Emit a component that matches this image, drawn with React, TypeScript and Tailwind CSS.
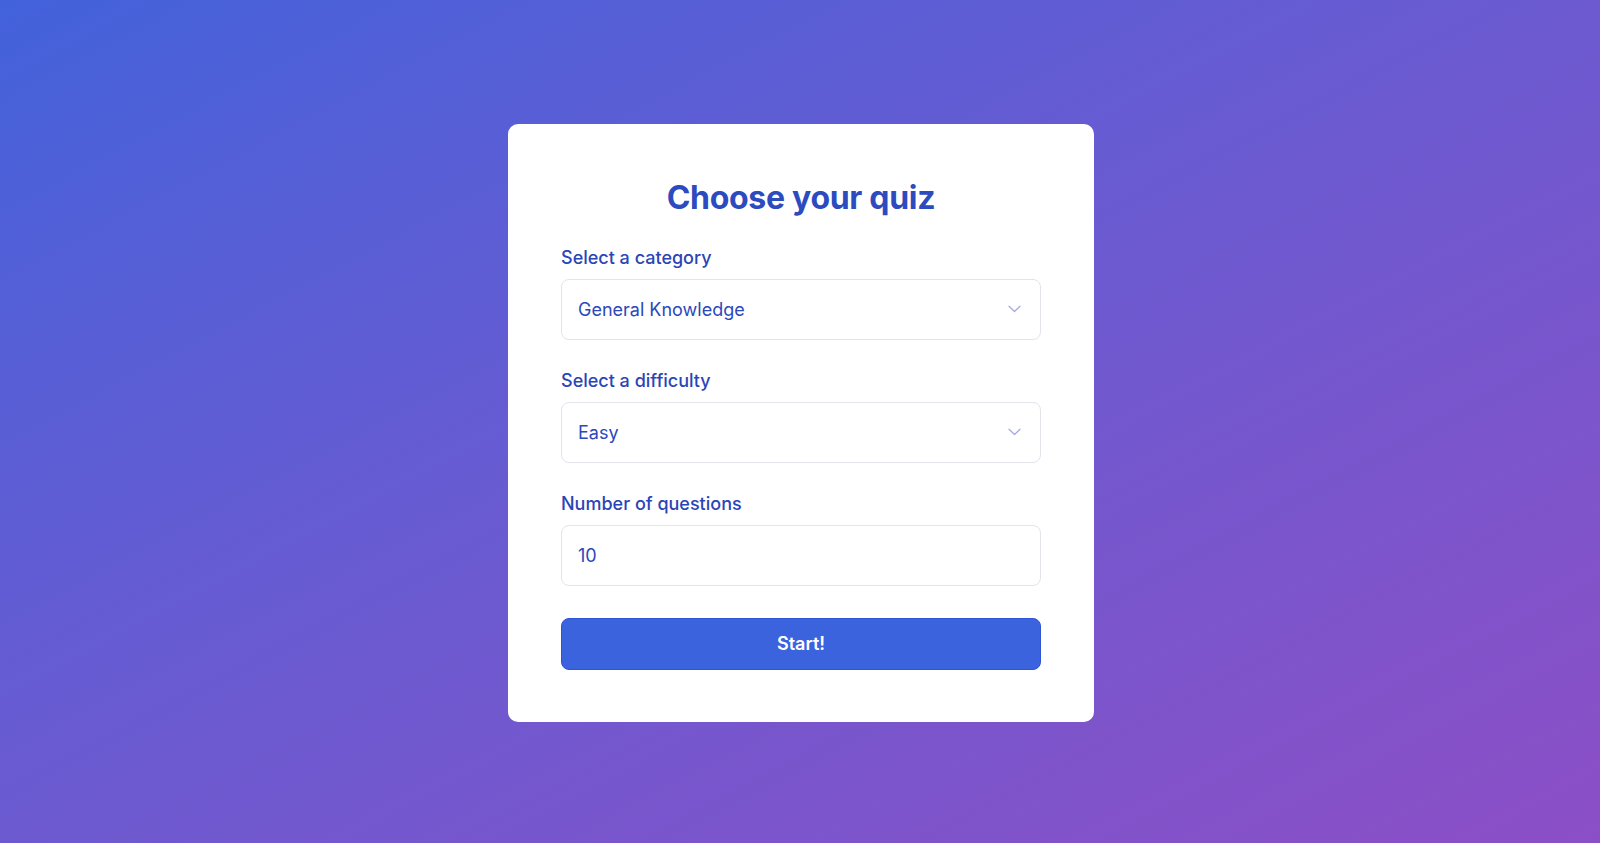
import React from "react";

function Chevron() {
  return (
    <svg width="13" height="8" viewBox="0 0 13 8" fill="none" className="shrink-0">
      <polyline points="1,1.2 6.5,6.5 12,1.2" stroke="#a3a8df" strokeWidth="1.2" strokeLinecap="round" strokeLinejoin="round" />
    </svg>
  );
}

function Field({ label, value, select }: { label: string; value: string; select?: boolean }) {
  return (
    <div className="flex flex-col">
      <label className="text-[18px] leading-6 font-medium text-[#2a45b6]">{label}</label>
      <div className="mt-[9px] h-[61px] rounded-[8px] border border-[#e3e4ea] bg-white flex items-center justify-between pl-4 pr-[19px]">
        <span className="text-[18px] text-[#2b48bd]">{value}</span>
        {select && <Chevron />}
      </div>
    </div>
  );
}

export default function App() {
  return (
    <div
      className="min-h-screen w-full flex items-center justify-center pl-[2px] pt-[2px] bg-gradient-to-br from-[#4262db] to-[#8b4ec6]"
      style={{ fontFamily: "Inter, 'Noto Sans', sans-serif" }}
    >
      <div className="w-[586px] bg-white rounded-[10px] px-[53px] pt-[54px] pb-[52px] flex flex-col">
        <h1 className="text-[32px] leading-10 font-bold text-center text-[#2c4bbf] tracking-[-0.3px]">Choose your quiz</h1>
        <div className="mt-[28px] flex flex-col gap-[29px]">
          <Field label="Select a category" value="General Knowledge" select />
          <Field label="Select a difficulty" value="Easy" select />
          <Field label="Number of questions" value="10" />
        </div>
        <button className="mt-[32px] h-[52px] w-full rounded-[8px] bg-[#3c63de] border border-[#2f55d4] text-white text-[18px] font-semibold">
          Start!
        </button>
      </div>
    </div>
  );
}
